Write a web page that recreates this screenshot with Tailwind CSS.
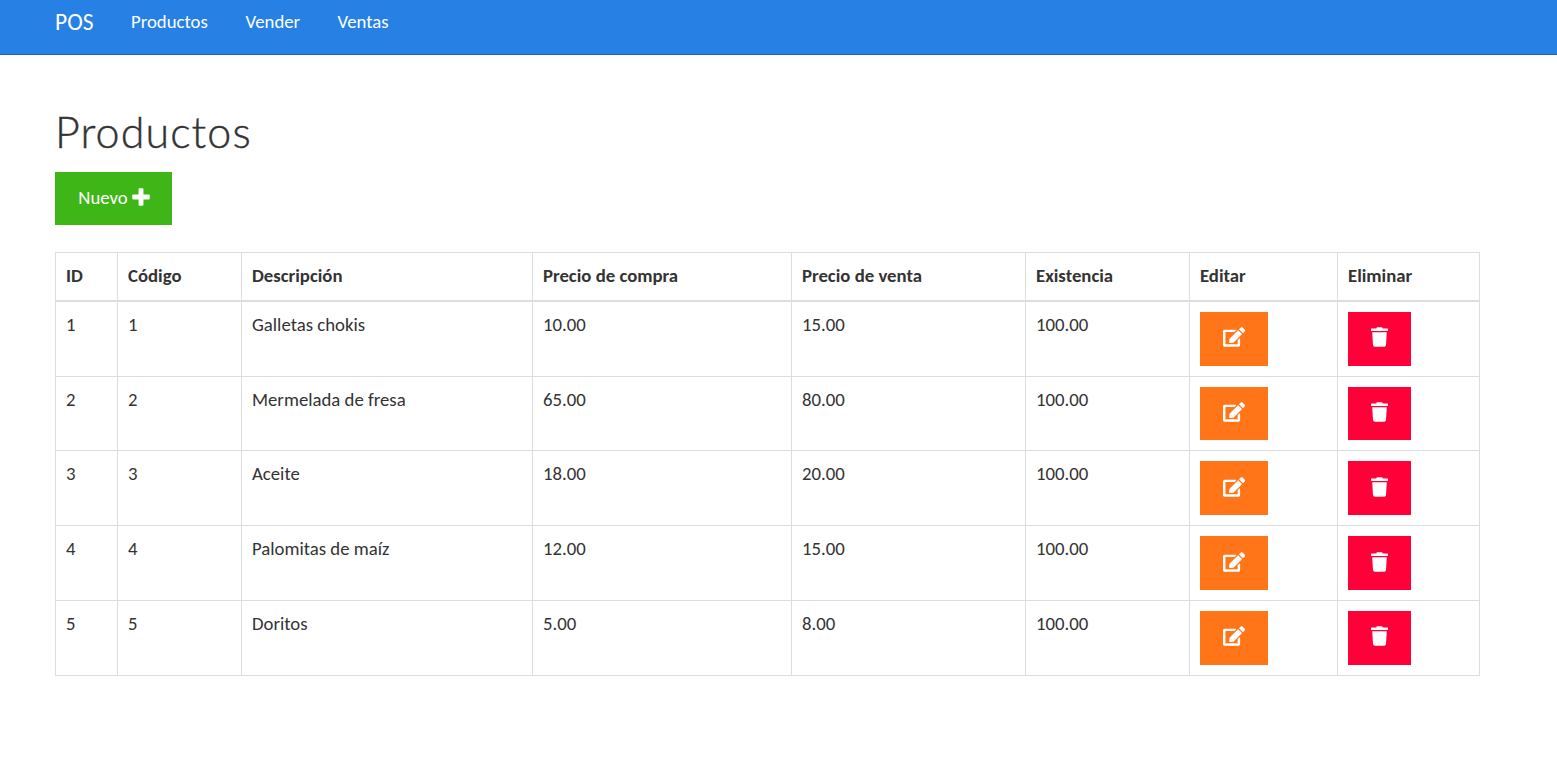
<!DOCTYPE html>
<html lang="es">
<head>
    <meta charset="UTF-8">
    <meta name="viewport" content="width=device-width, initial-scale=1.0">
    <title>Productos - POS</title>
    <script src="https://cdn.jsdelivr.net/npm/@tailwindcss/browser@4"></script>
</head>
<body class="bg-white text-[#333] font-[Carlito,Lato,sans-serif] text-[18.75px] leading-[25px]">
    <svg class="hidden">
        <symbol id="plus" viewBox="0 0 448 512"><path d="M448 294.2v-76.4c0-13.3-10.7-24-24-24H286.2V56c0-13.3-10.7-24-24-24h-76.4c-13.3 0-24 10.7-24 24v137.8H24c-13.3 0-24 10.7-24 24v76.4c0 13.3 10.7 24 24 24h137.8V456c0 13.3 10.7 24 24 24h76.4c13.3 0 24-10.7 24-24V318.2H424c13.3 0 24-10.7 24-24z"/></symbol>
        <symbol id="edit" viewBox="0 0 576 512"><path d="M402.6 83.2l90.2 90.2c3.8 3.8 3.8 10 0 13.8L274.4 405.6l-92.8 10.3c-12.4 1.4-22.9-9.1-21.5-21.5l10.3-92.8L388.8 83.2c3.8-3.8 10-3.8 13.8 0zm162-22.9l-48.8-48.8c-15.2-15.2-39.9-15.2-55.2 0l-35.4 35.4c-3.8 3.8-3.8 10 0 13.8l90.2 90.2c3.8 3.8 10 3.8 13.8 0l35.4-35.4c15.2-15.3 15.2-40 0-55.2zM384 346.2V448H64V128h229.8c3.2 0 6.2-1.3 8.5-3.5l40-40c7.6-7.6 2.2-20.5-8.5-20.5H48C21.5 64 0 85.5 0 112v352c0 26.5 21.5 48 48 48h352c26.5 0 48-21.5 48-48V306.2c0-10.7-12.9-16-20.5-8.5l-40 40c-2.2 2.3-3.5 5.3-3.5 8.5z"/></symbol>
        <symbol id="trash" viewBox="0 0 448 512"><path d="M432 32H312l-9.4-18.7A24 24 0 0 0 281.1 0H166.8a23.72 23.72 0 0 0-21.4 13.3L136 32H16A16 16 0 0 0 0 48v32a16 16 0 0 0 16 16h416a16 16 0 0 0 16-16V48a16 16 0 0 0-16-16zM53.2 467a48 48 0 0 0 47.9 45h245.8a48 48 0 0 0 47.9-45L416 128H32z"/></symbol>
    </svg>
    <nav class="h-[55px] bg-[#2780e3] border-b border-[#1967be] text-white px-[55px] pt-[9px]">
        <ul class="flex">
            <li class="w-[76px] text-[23.5px] leading-[27px]"><a href="#">POS</a></li>
            <li class="w-[114.5px]"><a href="#">Productos</a></li>
            <li class="w-[92px]"><a href="#">Vender</a></li>
            <li><a href="#">Ventas</a></li>
        </ul>
    </nav>
    <main class="px-[55px] pt-[51px]">
        <h1 class="font-[Lato,Carlito,sans-serif] text-[43px] leading-[52px] font-light tracking-[1.1px] [-webkit-text-stroke:0.4px_#333]">Productos</h1>
        <a href="#" class="mt-[14px] flex items-center justify-center gap-1 w-[117px] h-[53px] pb-[2px] pl-px bg-[#3fb618] text-white">Nuevo <svg class="w-[18px] h-[20px] mb-px fill-current"><use href="#plus"/></svg></a>
        <table class="mt-[27px] w-[1425px] table-fixed border-separate border-spacing-0 border-t border-l border-[#ddd] [&_th]:border-r [&_th]:border-b-2 [&_th]:border-[#ddd] [&_th]:px-[10px] [&_th]:pb-[2px] [&_th]:text-left [&_td]:border-r [&_td]:border-b [&_td]:border-[#ddd] [&_td]:px-[10px] [&_td]:pt-[10px] [&_td]:align-top">
            <colgroup>
                <col class="w-[62px]">
                <col class="w-[124px]">
                <col class="w-[291px]">
                <col class="w-[259px]">
                <col class="w-[234px]">
                <col class="w-[164px]">
                <col class="w-[148px]">
                <col class="w-[142px]">
            </colgroup>
            <thead>
                <tr class="h-[49px]">
                    <th>ID</th>
                    <th>Código</th>
                    <th>Descripción</th>
                    <th>Precio de compra</th>
                    <th>Precio de venta</th>
                    <th>Existencia</th>
                    <th>Editar</th>
                    <th>Eliminar</th>
                </tr>
            </thead>
            <tbody>
                <tr class="h-[75px]">
                    <td>1</td>
                    <td>1</td>
                    <td>Galletas chokis</td>
                    <td>10.00</td>
                    <td>15.00</td>
                    <td>100.00</td>
                    <td><a href="#" class="flex justify-center w-[68px] h-[54px] pt-[15px] bg-[#ff7518] text-white"><svg class="w-[22px] h-[20px] fill-current"><use href="#edit"/></svg></a></td>
                    <td><a href="#" class="flex justify-center w-[63px] h-[54px] pt-[15px] bg-[#ff0039] text-white"><svg class="w-[17px] h-[20px] fill-current"><use href="#trash"/></svg></a></td>
                </tr>
                <tr class="h-[74px]">
                    <td>2</td>
                    <td>2</td>
                    <td>Mermelada de fresa</td>
                    <td>65.00</td>
                    <td>80.00</td>
                    <td>100.00</td>
                    <td><a href="#" class="flex justify-center w-[68px] h-[53px] pt-[15px] bg-[#ff7518] text-white"><svg class="w-[22px] h-[20px] fill-current"><use href="#edit"/></svg></a></td>
                    <td><a href="#" class="flex justify-center w-[63px] h-[53px] pt-[15px] bg-[#ff0039] text-white"><svg class="w-[17px] h-[20px] fill-current"><use href="#trash"/></svg></a></td>
                </tr>
                <tr class="h-[75px]">
                    <td>3</td>
                    <td>3</td>
                    <td>Aceite</td>
                    <td>18.00</td>
                    <td>20.00</td>
                    <td>100.00</td>
                    <td><a href="#" class="flex justify-center w-[68px] h-[54px] pt-4 bg-[#ff7518] text-white"><svg class="w-[22px] h-[20px] fill-current"><use href="#edit"/></svg></a></td>
                    <td><a href="#" class="flex justify-center w-[63px] h-[54px] pt-4 bg-[#ff0039] text-white"><svg class="w-[17px] h-[20px] fill-current"><use href="#trash"/></svg></a></td>
                </tr>
                <tr class="h-[75px]">
                    <td>4</td>
                    <td>4</td>
                    <td>Palomitas de maíz</td>
                    <td>12.00</td>
                    <td>15.00</td>
                    <td>100.00</td>
                    <td><a href="#" class="flex justify-center w-[68px] h-[54px] pt-4 bg-[#ff7518] text-white"><svg class="w-[22px] h-[20px] fill-current"><use href="#edit"/></svg></a></td>
                    <td><a href="#" class="flex justify-center w-[63px] h-[54px] pt-4 bg-[#ff0039] text-white"><svg class="w-[17px] h-[20px] fill-current"><use href="#trash"/></svg></a></td>
                </tr>
                <tr class="h-[75px]">
                    <td>5</td>
                    <td>5</td>
                    <td>Doritos</td>
                    <td>5.00</td>
                    <td>8.00</td>
                    <td>100.00</td>
                    <td><a href="#" class="flex justify-center w-[68px] h-[54px] pt-[15px] bg-[#ff7518] text-white"><svg class="w-[22px] h-[20px] fill-current"><use href="#edit"/></svg></a></td>
                    <td><a href="#" class="flex justify-center w-[63px] h-[54px] pt-[15px] bg-[#ff0039] text-white"><svg class="w-[17px] h-[20px] fill-current"><use href="#trash"/></svg></a></td>
                </tr>
            </tbody>
        </table>
    </main>
</body>
</html>
